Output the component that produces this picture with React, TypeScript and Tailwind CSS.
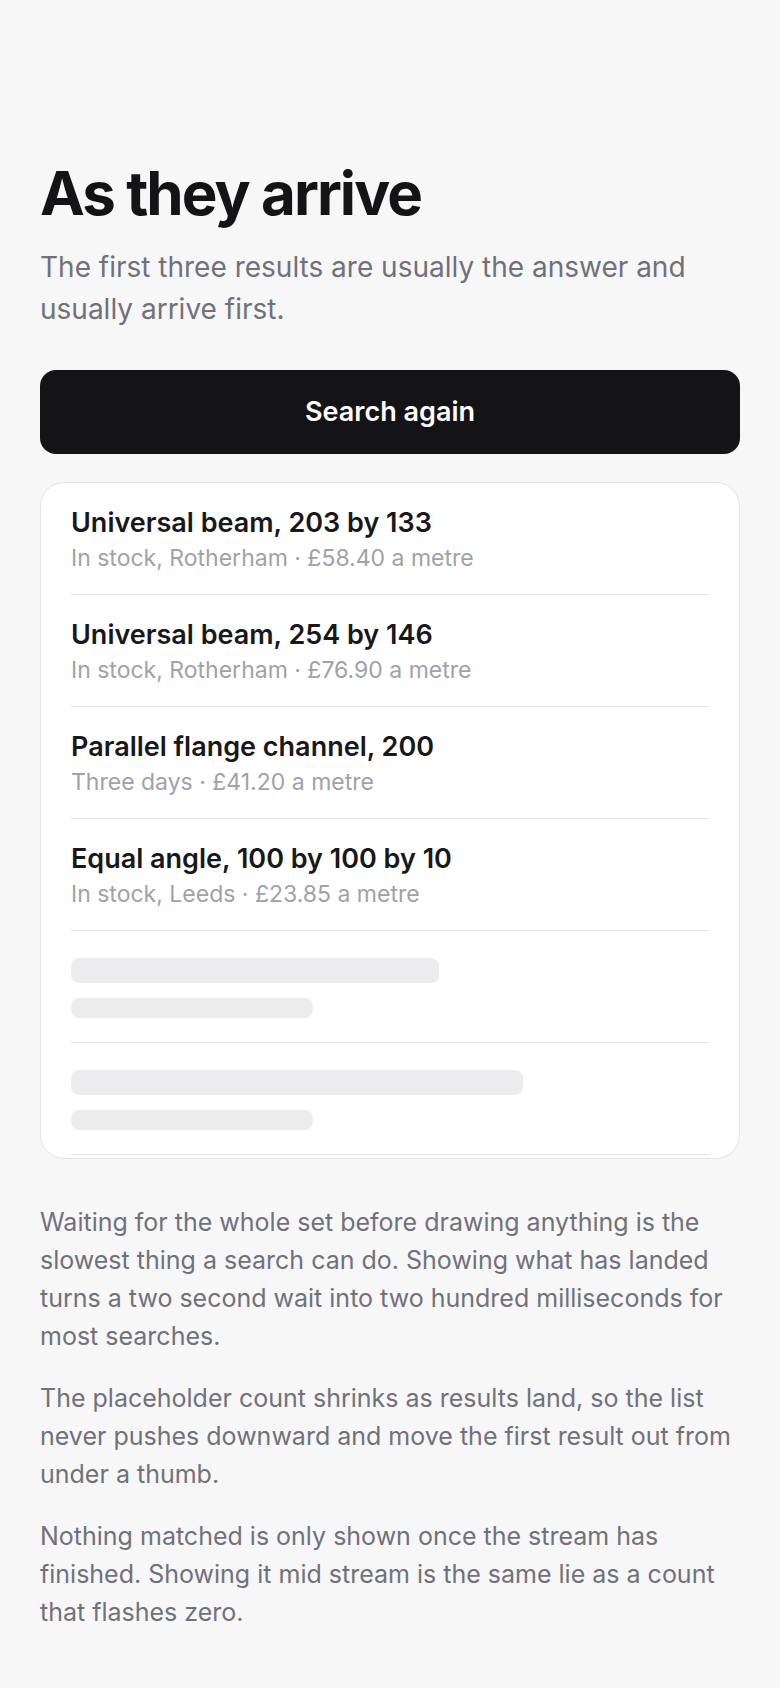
import { FC } from "react";

type Result = {
  name: string;
  detail: string;
};

const results: Result[] = [
  { name: "Universal beam, 203 by 133", detail: "In stock, Rotherham · £58.40 a metre" },
  { name: "Universal beam, 254 by 146", detail: "In stock, Rotherham · £76.90 a metre" },
  { name: "Parallel flange channel, 200", detail: "Three days · £41.20 a metre" },
  { name: "Equal angle, 100 by 100 by 10", detail: "In stock, Leeds · £23.85 a metre" },
];

// widths of the title bar for each pending row
const pending = ["w-[368px]", "w-[452px]"];

const ResultRow: FC<{ result: Result }> = ({ result }) => (
  <li className="border-b border-[#e4e4e7] pt-6 pb-[21px]">
    <div className="text-[27px] leading-8 font-semibold text-[#18181b]">{result.name}</div>
    <div className="mt-1 text-[23px] leading-[30px] text-[#a1a1aa]">{result.detail}</div>
  </li>
);

const PendingRow: FC<{ width: string }> = ({ width }) => (
  <li className="border-b border-[#e4e4e7] pt-[27px] pb-6">
    <div className={`h-[25px] rounded-lg bg-[#ededef] ${width}`} />
    <div className="mt-[15px] h-5 w-[242px] rounded-lg bg-[#ededef]" />
  </li>
);

export default function App() {
  return (
    <div className="min-h-screen bg-[#f7f7f8] px-10 pt-40 pb-20 font-['Inter',sans-serif] antialiased">
      <h1 className="text-[60px] leading-[1.1] font-bold tracking-[-0.032em] text-[#141417]">As they arrive</h1>
      <p className="mt-5 text-[28px] leading-[42px] text-[#71717a]">
        The first three results are usually the answer and usually arrive first.
      </p>

      <button
        type="button"
        className="mt-10 flex h-[84px] w-full items-center justify-center rounded-2xl bg-[#141417] text-[27px] font-semibold text-white"
      >
        Search again
      </button>

      <ul className="mt-7 rounded-3xl border border-[#e4e4e7] bg-white px-[30px] pb-[3px]">
        {results.map((r) => (
          <ResultRow key={r.name} result={r} />
        ))}
        {pending.map((w, i) => (
          <PendingRow key={i} width={w} />
        ))}
      </ul>

      <div className="mt-11 flex flex-col gap-6 text-[25px] leading-[38px] text-[#71717a]">
        <p>
          Waiting for the whole set before drawing anything is the slowest thing a search can do. Showing what has
          landed turns a two second wait into two hundred milliseconds for most searches.
        </p>
        <p>
          The placeholder count shrinks as results land, so the list never pushes downward and move the first result
          out from under a thumb.
        </p>
        <p>
          Nothing matched is only shown once the stream has finished. Showing it mid stream is the same lie as a count
          that flashes zero.
        </p>
      </div>
    </div>
  );
}
